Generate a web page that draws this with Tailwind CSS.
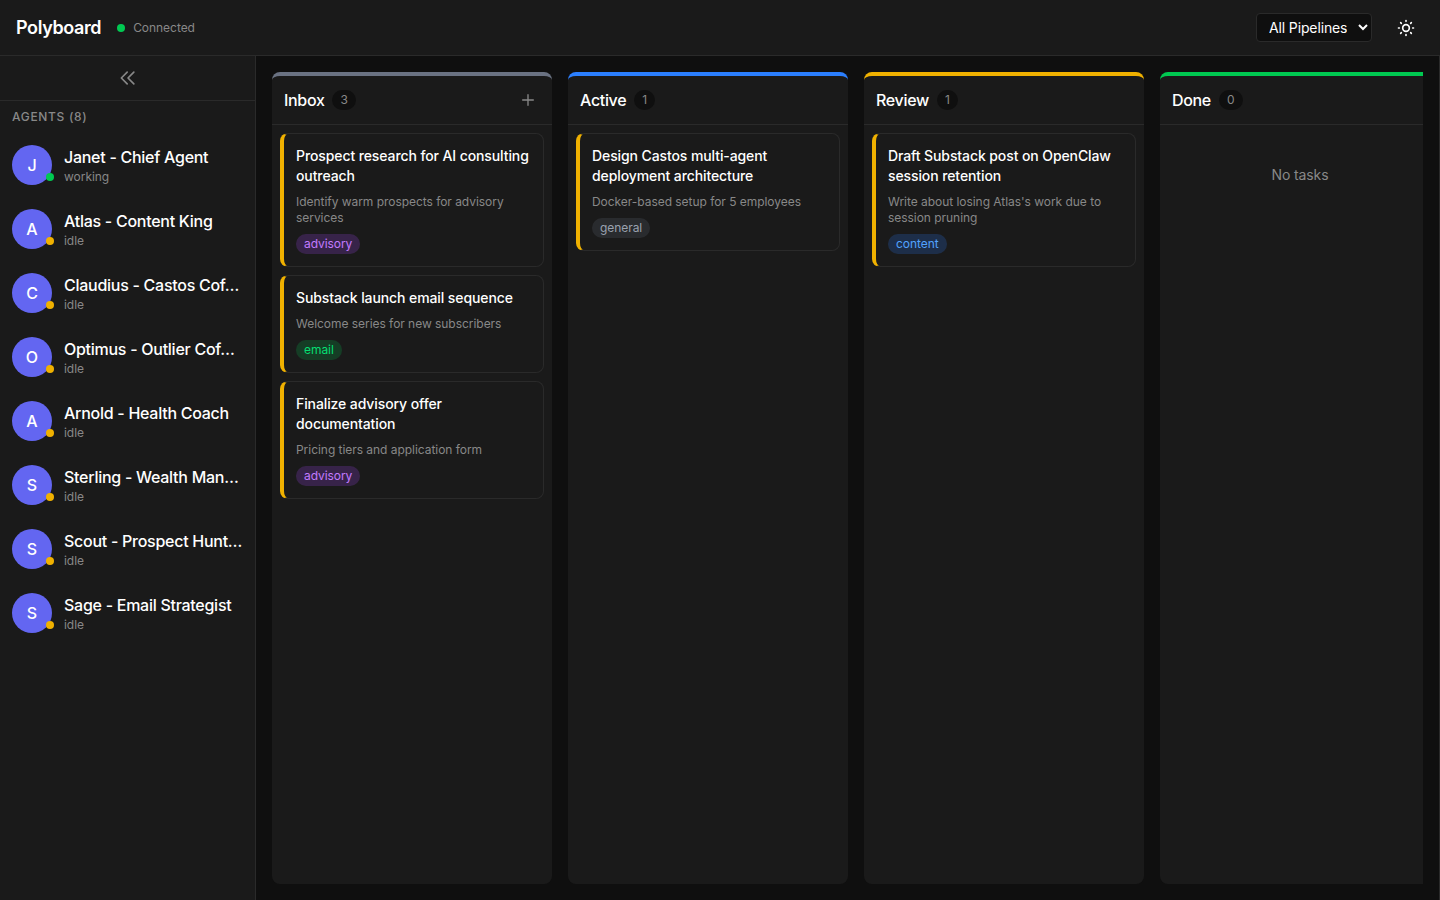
<!DOCTYPE html>
<html lang="en">
<head>
  <meta charset="UTF-8" />
  <meta name="viewport" content="width=device-width, initial-scale=1.0" />
  <title>Polyboard</title>
  <script src="https://cdn.jsdelivr.net/npm/@tailwindcss/browser@4"></script>
</head>
<body class="h-screen overflow-hidden flex flex-col bg-[#0f0f0f] text-white font-['Inter',sans-serif] scheme-dark">
  <!-- Header -->
  <header class="h-14 shrink-0 flex items-center justify-between px-4 bg-[#1a1a1a] border-b border-[#2a2a2a]">
    <div class="flex items-center gap-4">
      <h1 class="text-lg font-semibold tracking-[-0.39px]">Polyboard</h1>
      <div class="flex items-center gap-2">
        <span class="w-2 h-2 rounded-full bg-green-500"></span>
        <span class="text-xs text-[#888888] tracking-[-0.04px]">Connected</span>
      </div>
    </div>
    <div class="flex items-center gap-4">
      <select class="w-[116px] h-[29px] px-2 text-sm tracking-[-0.13px] rounded bg-[#0f0f0f] border border-[#2a2a2a] text-white">
        <option>All Pipelines</option>
        <option>advisory</option>
        <option>content</option>
        <option>email</option>
        <option>general</option>
      </select>
      <button class="w-9 h-9 flex items-center justify-center rounded" aria-label="Toggle theme">
        <svg class="w-5 h-5" viewBox="0 0 24 24" fill="none" stroke="currentColor" stroke-width="2" stroke-linecap="round" stroke-linejoin="round">
          <circle cx="12" cy="12" r="4" />
          <path d="M12 3v1M12 20v1M3 12h1M20 12h1M18.364 5.636l-.707.707M6.343 17.657l-.707.707M5.636 5.636l.707.707M17.657 17.657l.707.707" />
        </svg>
      </button>
    </div>
  </header>

  <div class="flex-1 min-h-0 flex">
    <!-- Agents -->
    <aside class="w-64 shrink-0 bg-[#1a1a1a] border-r border-[#2a2a2a]">
      <button class="w-full h-[45px] flex items-center justify-center border-b border-[#2a2a2a] text-[#888888]" aria-label="Collapse sidebar">
        <svg class="w-5 h-5" viewBox="0 0 24 24" fill="none" stroke="currentColor" stroke-width="2" stroke-linecap="round" stroke-linejoin="round">
          <path d="M11 19l-7-7 7-7m8 14l-7-7 7-7" />
        </svg>
      </button>
      <h2 class="px-3 py-2 text-xs font-[450] uppercase tracking-[0.68px] text-[#888888]">Agents (8)</h2>
      <ul id="agents"></ul>
    </aside>

    <!-- Board -->
    <main class="flex-1 min-w-0 p-4 border-r border-[#2a2a2a]">
      <div id="board" class="h-full flex gap-4 overflow-hidden"></div>
    </main>
  </div>

  <script>
    const agents = [
      { name: 'Janet - Chief Agent', status: 'working' },
      { name: 'Atlas - Content King', status: 'idle' },
      { name: 'Claudius - Castos Cof…', status: 'idle' },
      { name: 'Optimus - Outlier Cof…', status: 'idle' },
      { name: 'Arnold - Health Coach', status: 'idle' },
      { name: 'Sterling - Wealth Man…', status: 'idle' },
      { name: 'Scout - Prospect Hunt…', status: 'idle' },
      { name: 'Sage - Email Strategist', status: 'idle' },
    ];

    const statusColors = { working: 'bg-green-500', idle: 'bg-yellow-500' };

    const tagColors = {
      advisory: 'bg-purple-500/20 text-purple-400',
      email: 'bg-green-500/20 text-green-400',
      content: 'bg-blue-500/20 text-blue-400',
      general: 'bg-gray-500/20 text-gray-400',
    };

    const columns = [
      {
        title: 'Inbox', border: 'border-t-gray-500', canAdd: true,
        tasks: [
          { title: 'Prospect research for AI consulting outreach', text: 'Identify warm prospects for advisory services', tag: 'advisory' },
          { title: 'Substack launch email sequence', text: 'Welcome series for new subscribers', tag: 'email' },
          { title: 'Finalize advisory offer documentation', text: 'Pricing tiers and application form', tag: 'advisory' },
        ],
      },
      {
        title: 'Active', border: 'border-t-blue-500',
        tasks: [
          { title: 'Design Castos multi-agent deployment architecture', text: 'Docker-based setup for 5 employees', tag: 'general' },
        ],
      },
      {
        title: 'Review', border: 'border-t-yellow-500',
        tasks: [
          { title: 'Draft Substack post on OpenClaw session retention', text: "Write about losing Atlas's work due to session pruning", tag: 'content' },
        ],
      },
      { title: 'Done', border: 'border-t-green-500', tasks: [] },
    ];

    const addButton = `
      <button class="w-6 h-6 flex items-center justify-center text-[#888888]" aria-label="Add task">
        <svg class="w-4 h-4" viewBox="0 0 24 24" fill="none" stroke="currentColor" stroke-width="2" stroke-linecap="round">
          <path d="M12 4v16m8-8H4" />
        </svg>
      </button>`;

    const taskCard = task => `
      <article class="p-3 rounded-lg bg-[#1a1a1a] border border-l-4 border-[#2a2a2a] border-l-yellow-500">
        <h4 class="text-sm font-[450] tracking-[-0.1px]">${task.title}</h4>
        <p class="mt-2 text-xs tracking-[-0.04px] text-[#888888]">${task.text}</p>
        <div class="mt-2 flex">
          <span class="px-2 py-0.5 text-xs tracking-[-0.06px] rounded-full ${tagColors[task.tag]}">${task.tag}</span>
        </div>
      </article>`;

    document.getElementById('agents').innerHTML = agents.map(agent => `
      <li class="flex items-center gap-3 p-3">
        <div class="relative w-10 h-10 shrink-0 flex items-center justify-center rounded-full bg-[#6366f1] font-[450]">
          ${agent.name[0]}
          <span class="absolute -right-0.5 bottom-1 w-2 h-2 rounded-full ${statusColors[agent.status]}"></span>
        </div>
        <div class="min-w-0 flex-1">
          <div class="font-[450] tracking-[-0.27px] whitespace-nowrap">${agent.name}</div>
          <div class="text-xs tracking-[-0.04px] text-[#888888]">${agent.status}</div>
        </div>
      </li>`).join('');

    document.getElementById('board').innerHTML = columns.map(column => `
      <section class="w-[280px] shrink-0 flex flex-col rounded-lg bg-[#1a1a1a] border-t-4 ${column.border}">
        <div class="flex items-center justify-between p-3 border-b border-[#2a2a2a]">
          <div class="flex items-center gap-2">
            <h3 class="font-[450] tracking-[-0.33px]">${column.title}</h3>
            <span class="px-2 py-0.5 text-xs rounded-full bg-[#0f0f0f] text-[#888888]">${column.tasks.length}</span>
          </div>
          ${column.canAdd ? addButton : ''}
        </div>
        <div class="flex-1 p-2 space-y-2">
          ${column.tasks.map(taskCard).join('') || '<p class="py-8 text-center text-sm tracking-[-0.13px] text-[#888888]">No tasks</p>'}
        </div>
      </section>`).join('');
  </script>
</body>
</html>
